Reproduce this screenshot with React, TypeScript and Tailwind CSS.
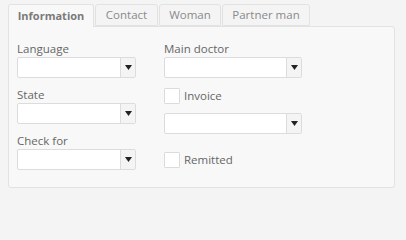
import { useState } from 'react'

const tabs = [
  { label: 'Information', w: 'w-[86px]' },
  { label: 'Contact', w: 'w-[63px]' },
  { label: 'Woman', w: 'w-[62px]' },
  { label: 'Partner man', w: 'w-[88px]' },
]

function Select() {
  return (
    <div className="flex h-[21px] rounded-[2px] border border-[#dcdcdc] bg-white">
      <div className="flex-1" />
      <div className="flex w-[15px] items-center justify-center border-l border-[#dcdcdc] bg-[#f4f4f4]">
        <svg width="7" height="5" viewBox="0 0 7 5">
          <path d="M0 0h7L3.5 5z" fill="#222" />
        </svg>
      </div>
    </div>
  )
}

function Check({ label }: { label: string }) {
  return (
    <label className="flex h-4 items-center gap-[4px]">
      <span className="h-4 w-4 rounded-[1px] border border-[#dcdcdc] bg-white" />
      <span className="text-[11.5px] leading-4 text-[#666]">{label}</span>
    </label>
  )
}

export default function App() {
  const [active, setActive] = useState(0)

  return (
    <div className="h-[240px] w-[406px] bg-[#f4f4f4] pt-[4px] pl-[8px] font-['Open_Sans',sans-serif]">
      <div className="flex gap-px">
        {tabs.map((t, i) => (
          <button
            key={t.label}
            onClick={() => setActive(i)}
            className={
              i === active
                ? `relative z-10 -mb-px flex h-[23px] ${t.w} items-center justify-center rounded-t-[3px] border border-b-0 border-[#e2e2e2] bg-[#f8f8f8] text-[11px] font-bold text-[#7a7a7a]`
                : `flex h-[22px] ${t.w} items-center justify-center rounded-t-[3px] border border-[#e2e2e2] bg-[#f4f4f4] text-[11.5px] text-[#8a8a8a]`
            }
          >
            {t.label}
          </button>
        ))}
      </div>
      <div className="flex w-[387px] gap-[28px] rounded-b-[3px] rounded-tr-[3px] border border-[#e2e2e2] bg-[#f8f8f8] pt-[14px] pb-[17px] pl-[8px]">
        <div className="flex w-[119px] flex-col gap-[9px]">
          {['Language', 'State', 'Check for'].map((l) => (
            <div key={l}>
              <div className="h-4 text-[11.5px] leading-4 text-[#666]">{l}</div>
              <Select />
            </div>
          ))}
        </div>
        <div className="flex w-[138px] flex-col">
          <div className="h-4 text-[11.5px] leading-4 text-[#666]">Main doctor</div>
          <Select />
          <div className="mt-[10px]">
            <Check label="Invoice" />
          </div>
          <div className="mt-[9px]">
            <Select />
          </div>
          <div className="mt-[18px]">
            <Check label="Remitted" />
          </div>
        </div>
      </div>
    </div>
  )
}
